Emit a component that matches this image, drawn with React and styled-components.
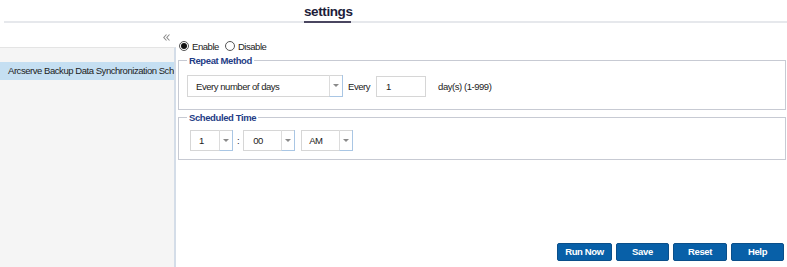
import React from "react";
import styled, { createGlobalStyle } from "styled-components";

const FONT = `"Liberation Sans", Arial, sans-serif`;

const Global = createGlobalStyle`
  html, body { margin: 0; padding: 0; background: #fff; }
  body { font-family: ${FONT}; font-size: 9.5px; letter-spacing: -0.45px; color: #222; }
  * { box-sizing: border-box; }
`;

const Page = styled.div`
  width: 787px;
  height: 267px;
  display: flex;
  flex-direction: column;
  overflow: hidden;
`;

const Header = styled.div`
  height: 23px;
  margin-left: 4px;
  border-bottom: 2px solid #e6e8ec;
  display: flex;
  align-items: flex-end;
`;

const Tab = styled.div`
  margin-left: 300px;
  width: 47px;
  height: 21px;
  padding-top: 2px;
  text-align: center;
  font-size: 13.5px;
  letter-spacing: -0.4px;
  font-weight: 700;
  color: #1d1d3a;
  line-height: 15px;
  border-bottom: 2px solid #4a4660;
  margin-bottom: -2px;
  white-space: nowrap;
`;

const Body = styled.div`
  flex: 1;
  display: flex;
  min-height: 0;
`;

const Sidebar = styled.div`
  width: 177px;
  display: flex;
  flex-direction: column;
`;

const SideTop = styled.div`
  height: 24px;
  display: flex;
  align-items: flex-end;
  justify-content: flex-end;
  padding: 0 7px 6px 0;
`;

const List = styled.div`
  flex: 1;
  background: #f5f5f5;
  border-top: 1px solid #e4e4e4;
  border-right: 2px solid #d4dde8;
  margin-right: 1px;
  padding-top: 14px;
  overflow: hidden;
`;

const ListRow = styled.div`
  height: 18px;
  line-height: 18px;
  padding-left: 8px;
  white-space: nowrap;
  overflow: hidden;
  color: #222;
  background: ${(p) => (p.$selected ? "#c5dff2" : "transparent")};
`;

const Main = styled.div`
  flex: 1;
  display: flex;
  flex-direction: column;
  padding: 17px 1px 6px 1px;
`;

const RadioRow = styled.div`
  display: flex;
  align-items: center;
  height: 12px;
  padding-left: 1px;
  gap: 3px;
`;

const Radio = styled.span`
  width: 10px;
  height: 10px;
  border-radius: 50%;
  border: 1px solid #555;
  background: #fff;
  display: inline-flex;
  align-items: center;
  justify-content: center;
  &::after {
    content: "";
    width: 6px;
    height: 6px;
    border-radius: 50%;
    background: ${(p) => (p.$checked ? "#111" : "transparent")};
  }
`;

const RadioLabel = styled.span`
  color: #222;
  margin-right: 3px;
`;

const Fieldset = styled.fieldset`
  margin: ${(p) => p.$mt}px 0 0 0;
  border: 1px solid #c7cad3;
  padding: ${(p) => p.$pad};
  min-width: 0;
`;

const Legend = styled.legend`
  font-size: 9.5px;
  letter-spacing: -0.4px;
  font-weight: 700;
  color: #1f3d86;
  line-height: 13px;
  padding: 0 2px;
  margin-left: ${(p) => p.$ml}px;
`;

const Row = styled.div`
  display: flex;
  align-items: center;
`;

const Select = styled.div`
  width: ${(p) => p.$w}px;
  height: ${(p) => p.$h}px;
  border: 1px solid #d6d6d6;
  background: #fff;
  display: flex;
`;

const SelectText = styled.div`
  flex: 1;
  padding-left: ${(p) => p.$pl}px;
  display: flex;
  align-items: center;
  color: #222;
  white-space: nowrap;
`;

const Arrow = styled.div`
  width: 14px;
  border-left: 1px solid #dcdcdc;
  border-right: 1px solid #a9c6e4;
  border-bottom: 1px solid #a9c6e4;
  margin: -1px -1px -1px 0;
  display: flex;
  align-items: center;
  justify-content: center;
  &::after {
    content: "";
    border-left: 3px solid transparent;
    border-right: 3px solid transparent;
    border-top: 3px solid #8a8a8a;
  }
`;

const Label = styled.span`
  color: #222;
  margin: ${(p) => p.$m};
`;

const TextInput = styled.div`
  width: 50px;
  height: 21px;
  border: 1px solid #d6d6d6;
  background: #fff;
  padding-left: 9px;
  display: flex;
  align-items: center;
  color: #222;
`;

const Spacer = styled.div`
  flex: 1;
`;

const ButtonBar = styled.div`
  display: flex;
  justify-content: flex-end;
  gap: 4px;
  padding-right: 2px;
`;

const Button = styled.button`
  width: ${(p) => p.$w}px;
  height: 18px;
  border: 1px solid #0a4f8a;
  border-radius: 2px;
  background: #0860a8;
  color: #fff;
  font-family: ${FONT};
  font-size: 9.5px;
  letter-spacing: -0.35px;
  font-weight: 700;
  padding: 0;
  line-height: 16px;
`;

const CollapseIcon = () => (
  <svg width="7" height="7" viewBox="0 0 7 7" fill="none" stroke="#8c8c8c" strokeWidth="1.1">
    <path d="M3.5 0.5 L0.8 3.5 L3.5 6.5" />
    <path d="M6.5 0.5 L3.8 3.5 L6.5 6.5" />
  </svg>
);

export default function App() {
  return (
    <Page>
      <Global />
      <Header>
        <Tab>settings</Tab>
      </Header>
      <Body>
        <Sidebar>
          <SideTop>
            <CollapseIcon />
          </SideTop>
          <List>
            <ListRow $selected>Arcserve Backup Data Synchronization Schedule</ListRow>
          </List>
        </Sidebar>
        <Main>
          <RadioRow>
            <Radio $checked />
            <RadioLabel>Enable</RadioLabel>
            <Radio />
            <RadioLabel>Disable</RadioLabel>
          </RadioRow>
          <Fieldset $mt={2} $pad="8px 8px 12px 8px">
            <Legend $ml={0}>Repeat Method</Legend>
            <Row>
              <Select $w={156} $h={22}>
                <SelectText $pl={8}>Every number of days</SelectText>
                <Arrow />
              </Select>
              <Label $m="0 6px 0 5px">Every</Label>
              <TextInput>1</TextInput>
              <Label $m="0 0 0 12px">day(s) (1-999)</Label>
            </Row>
          </Fieldset>
          <Fieldset $mt={1} $pad="6px 8px 8px 11px">
            <Legend $ml={-3}>Scheduled Time</Legend>
            <Row>
              <Select $w={43} $h={21}>
                <SelectText $pl={8}>1</SelectText>
                <Arrow />
              </Select>
              <Label $m="0 4px 0 4px">:</Label>
              <Select $w={52} $h={21}>
                <SelectText $pl={9}>00</SelectText>
                <Arrow />
              </Select>
              <Label $m="0 3px 0 3px" />
              <Select $w={52} $h={21}>
                <SelectText $pl={7}>AM</SelectText>
                <Arrow />
              </Select>
            </Row>
          </Fieldset>
          <Spacer />
          <ButtonBar>
            <Button $w={55}>Run Now</Button>
            <Button $w={53}>Save</Button>
            <Button $w={54}>Reset</Button>
            <Button $w={53}>Help</Button>
          </ButtonBar>
        </Main>
      </Body>
    </Page>
  );
}
